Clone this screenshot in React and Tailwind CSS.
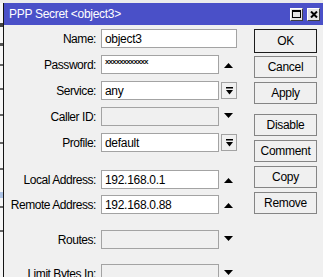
import React from "react";

const font = { fontFamily: '"Liberation Sans", Arial, sans-serif' };

function UpArrow() {
    return (
        <svg width="9" height="5" viewBox="0 0 9 5" className="block">
            <polygon points="0,5 4.5,0 9,5" fill="#000" />
        </svg>
    );
}

function DownArrow() {
    return (
        <svg width="9" height="5" viewBox="0 0 9 5" className="block">
            <polygon points="0,0 9,0 4.5,5" fill="#000" />
        </svg>
    );
}

function SelectIcon() {
    return (
        <svg width="7" height="8" viewBox="0 0 7 8" className="block">
            <rect x="0" y="0" width="7" height="1.5" fill="#000" />
            <polygon points="0,3 7,3 3.5,7.5" fill="#000" />
        </svg>
    );
}

function Row({ label, value, type, disabled, className }) {
    const inputBg = disabled ? "bg-[#f0f0f0]" : "bg-white";
    return (
        <div className={"flex items-center h-[19px] " + (className || "")}>
            <div className="w-[92px] text-right text-[12px] tracking-[-0.45px] leading-none text-black whitespace-nowrap">{label}</div>
            {type === "text" ? (
                <div className={"ml-[5px] w-[136px] h-[19px] border border-[#a3a3a3] flex items-center pl-[3px] text-[12px] tracking-[-0.3px] leading-none text-black " + inputBg}>
                    {value}
                </div>
            ) : (
                <>
                    <div className={"ml-[5px] w-[118px] h-[19px] border border-[#a3a3a3] flex items-center pl-[3px] text-[12px] tracking-[-0.3px] leading-none text-black overflow-hidden " + inputBg}>
                        {type === "password" ? (
                            <span className="text-[8px] font-bold tracking-[-0.9px] leading-none -mt-[5px] text-[#111]">xxxxxxxxxxxx</span>
                        ) : value}
                    </div>
                    {type === "select" && (
                        <div className="ml-[2px] w-[16px] h-[17px] border border-[#a3a3a3] flex items-center justify-center">
                            <SelectIcon />
                        </div>
                    )}
                    {(type === "up" || type === "password") && (
                        <div className="ml-[4px] w-[11px] flex justify-center mt-[2px]">
                            <UpArrow />
                        </div>
                    )}
                    {type === "down" && (
                        <div className="ml-[4px] w-[11px] flex justify-center -mt-[2px]">
                            <DownArrow />
                        </div>
                    )}
                </>
            )}
        </div>
    );
}

function Btn({ children, primary, className }) {
    return (
        <div
            className={
                "w-[63px] flex items-center justify-center text-[12px] tracking-[-0.3px] leading-none text-black bg-[#f0f0f0] border " +
                (primary ? "h-[24px] border-[#1c1c1c]" : "h-[22px] border-[#858585]") +
                " " + (className || "")
            }
        >
            {children}
        </div>
    );
}

function Separator({ className }) {
    return <div className={"ml-[9px] w-[226px] h-px bg-[#d7d7d7] " + (className || "")}></div>;
}

export default function App() {
    return (
        <div className="w-[323px] h-[277px] overflow-hidden bg-[#f0f0f0] flex flex-col" style={font}>
            <div className="h-[3px] bg-[#ececec] shrink-0"></div>
            <div className="flex flex-1 min-h-0">
                {/* strip of the window behind */}
                <div className="w-[3px] bg-[#f6f6f6] flex flex-col items-start shrink-0">
                    <div className="h-[20px]"></div>
                    <div className="w-[3px] h-[4px] bg-[#444]"></div>
                    <div className="h-[16px]"></div>
                    <div className="w-[3px] h-[3px] bg-[#555]"></div>
                    <div className="h-[18px]"></div>
                    <div className="w-[3px] h-[2px] bg-[#666]"></div>
                    <div className="h-[22px]"></div>
                    <div className="w-[3px] h-[2px] bg-[#666]"></div>
                    <div className="h-[24px]"></div>
                    <div className="w-[3px] h-[2px] bg-[#666]"></div>
                    <div className="h-[26px]"></div>
                    <div className="w-[3px] h-[2px] bg-[#666]"></div>
                    <div className="h-[24px]"></div>
                    <div className="w-[3px] h-[2px] bg-[#666]"></div>
                    <div className="h-[22px]"></div>
                    <div className="w-[3px] h-[6px] bg-[#aec4e6]"></div>
                    <div className="h-[8px]"></div>
                    <div className="w-[3px] h-[2px] bg-[#666]"></div>
                    <div className="h-[22px]"></div>
                    <div className="w-[3px] h-[2px] bg-[#666]"></div>
                </div>
                <div className="flex-1 border-l border-[#141414] flex flex-col min-w-0">
                    {/* title bar */}
                    <div className="h-[22px] bg-[#4a50c8] flex items-center shrink-0">
                        <div className="ml-[5px] text-[12px] tracking-[-0.3px] leading-none text-white whitespace-nowrap">PPP Secret &lt;object3&gt;</div>
                        <div className="ml-auto flex items-center gap-[4px] mr-[3px]">
                            <div className="w-[13px] h-[13px] bg-[#e4e4e4] border-t border-l border-white border-r border-b border-r-[#404040] border-b-[#404040] flex items-center justify-center">
                                <div className="w-[9px] h-[8px] border border-black border-t-2"></div>
                            </div>
                            <div className="w-[13px] h-[13px] bg-[#e4e4e4] border-t border-l border-white border-r border-b border-r-[#404040] border-b-[#404040] flex items-center justify-center">
                                <svg width="8" height="7" viewBox="0 0 8 7" className="block">
                                    <path d="M1 0.5 L7 6.5 M7 0.5 L1 6.5" stroke="#000" strokeWidth="2" />
                                </svg>
                            </div>
                        </div>
                    </div>
                    {/* body */}
                    <div className="flex flex-1 min-h-0">
                        <div className="w-[250px] flex flex-col pt-[4px]">
                            <Row label="Name:" value="object3" type="text" />
                            <Row label="Password:" type="password" className="mt-[7px]" />
                            <Row label="Service:" value="any" type="select" className="mt-[7px]" />
                            <Row label="Caller ID:" type="down" disabled className="mt-[7px]" />
                            <Row label="Profile:" value="default" type="select" className="mt-[7px]" />
                            <Separator className="mt-[8px]" />
                            <Row label="Local Address:" value="192.168.0.1" type="up" className="mt-[10px]" />
                            <Row label="Remote Address:" value="192.168.0.88" type="up" className="mt-[6px]" />
                            <Separator className="mt-[7px]" />
                            <Row label="Routes:" type="down" disabled className="mt-[9px]" />
                            <Separator className="mt-[7px]" />
                            <Row label="Limit Bytes In:" type="down" disabled className="mt-[8px]" />
                        </div>
                        <div className="flex flex-col pt-[4px]">
                            <Btn primary>OK</Btn>
                            <Btn className="mt-[3px]">Cancel</Btn>
                            <Btn className="mt-[4px]">Apply</Btn>
                            <Btn className="mt-[10px]">Disable</Btn>
                            <Btn className="mt-[4px]">Comment</Btn>
                            <Btn className="mt-[4px]">Copy</Btn>
                            <Btn className="mt-[4px]">Remove</Btn>
                        </div>
                    </div>
                </div>
            </div>
        </div>
    );
}
